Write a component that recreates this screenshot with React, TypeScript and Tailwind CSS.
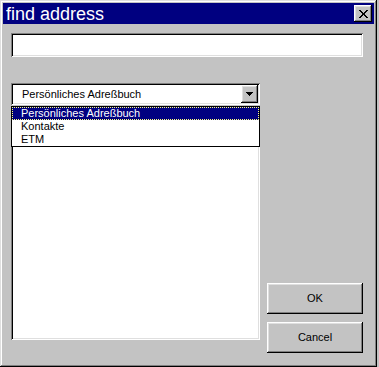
import React from "react";

const font = { fontFamily: '"Liberation Sans", Arial, sans-serif' };

function CloseGlyph() {
  const rows = [
    "XX.....XX",
    ".XX...XX.",
    "..XX.XX..",
    "...XXX...",
    "...XXX...",
    "..XX.XX..",
    ".XX...XX.",
    "XX.....XX",
  ];
  return (
    <svg width="9" height="8" viewBox="0 0 9 8" shapeRendering="crispEdges">
      {rows.flatMap((r, y) =>
        r.split("").map((c, x) =>
          c === "X" ? <rect key={`${x}-${y}`} x={x} y={y} width="1" height="1" fill="#000" /> : null
        )
      )}
    </svg>
  );
}

function ArrowGlyph() {
  return (
    <svg width="7" height="4" viewBox="0 0 7 4" shapeRendering="crispEdges">
      <rect x="0" y="0" width="7" height="1" fill="#000" />
      <rect x="1" y="1" width="5" height="1" fill="#000" />
      <rect x="2" y="2" width="3" height="1" fill="#000" />
      <rect x="3" y="3" width="1" height="1" fill="#000" />
    </svg>
  );
}

const raised =
  "shadow-[inset_-1px_-1px_#000,inset_1px_1px_#fff,inset_-2px_-2px_#808080,inset_2px_2px_#dfdfdf]";
const sunken =
  "shadow-[inset_1px_1px_#808080,inset_-1px_-1px_#fff,inset_2px_2px_#000,inset_-2px_-2px_#dfdfdf]";

export default function App() {
  return (
    <div className="w-[379px] h-[367px] bg-[#c3c3c3]" style={font}>
      <div className="w-[377px] h-[367px] bg-[#c3c3c3] flex flex-col shadow-[inset_-1px_-1px_#000,inset_1px_1px_#dfdfdf,inset_-2px_-2px_#808080,inset_2px_2px_#fff]">
        {/* Title bar */}
        <div className="mt-[3px] mx-[3px] h-[21px] bg-[#000080] flex items-center justify-between pl-[3px] pr-[2px]">
          <span className="text-white text-[18px] leading-none">find address</span>
          <div className={`w-[18px] h-[17px] bg-[#c3c3c3] flex items-center justify-center ${raised}`}>
            <CloseGlyph />
          </div>
        </div>

        {/* Content */}
        <div className="pl-[11px] pt-[9px] flex flex-col">
          <div className={`w-[352px] h-[24px] bg-white ${sunken}`} />

          <div className="mt-[26px] flex items-start gap-[7px]">
            {/* Left column */}
            <div className="w-[249px] flex flex-col">
              <div className={`h-[22px] bg-white flex items-center justify-between pl-[11px] pr-[2px] ${sunken}`}>
                <span className="text-[11px] text-black leading-none">Persönliches Adreßbuch</span>
                <div className={`w-[17px] h-[18px] bg-[#c3c3c3] flex items-center justify-center ${raised}`}>
                  <ArrowGlyph />
                </div>
              </div>
              <div className={`relative mt-[1px] h-[234px] bg-white ${sunken}`}>
                <div className="absolute left-0 top-0 w-[249px] border border-black bg-white flex flex-col text-[11px] leading-none">
                  <div className="h-[13px] bg-[#000080] text-white flex items-center pl-[9px] outline outline-1 outline-dotted outline-[#ffff80] -outline-offset-1">
                    Persönliches Adreßbuch
                  </div>
                  <div className="h-[13px] text-black flex items-center pl-[9px]">Kontakte</div>
                  <div className="h-[13px] text-black flex items-center pl-[9px]">ETM</div>
                </div>
              </div>
            </div>

            {/* Right column */}
            <div className="w-[96px] h-[270px] flex flex-col justify-end gap-[8px]">
              <div className={`h-[31px] flex items-center justify-center text-[11px] text-black ${raised}`}>OK</div>
              <div className={`h-[31px] flex items-center justify-center text-[11px] text-black ${raised}`}>Cancel</div>
            </div>
          </div>
        </div>
      </div>
    </div>
  );
}
